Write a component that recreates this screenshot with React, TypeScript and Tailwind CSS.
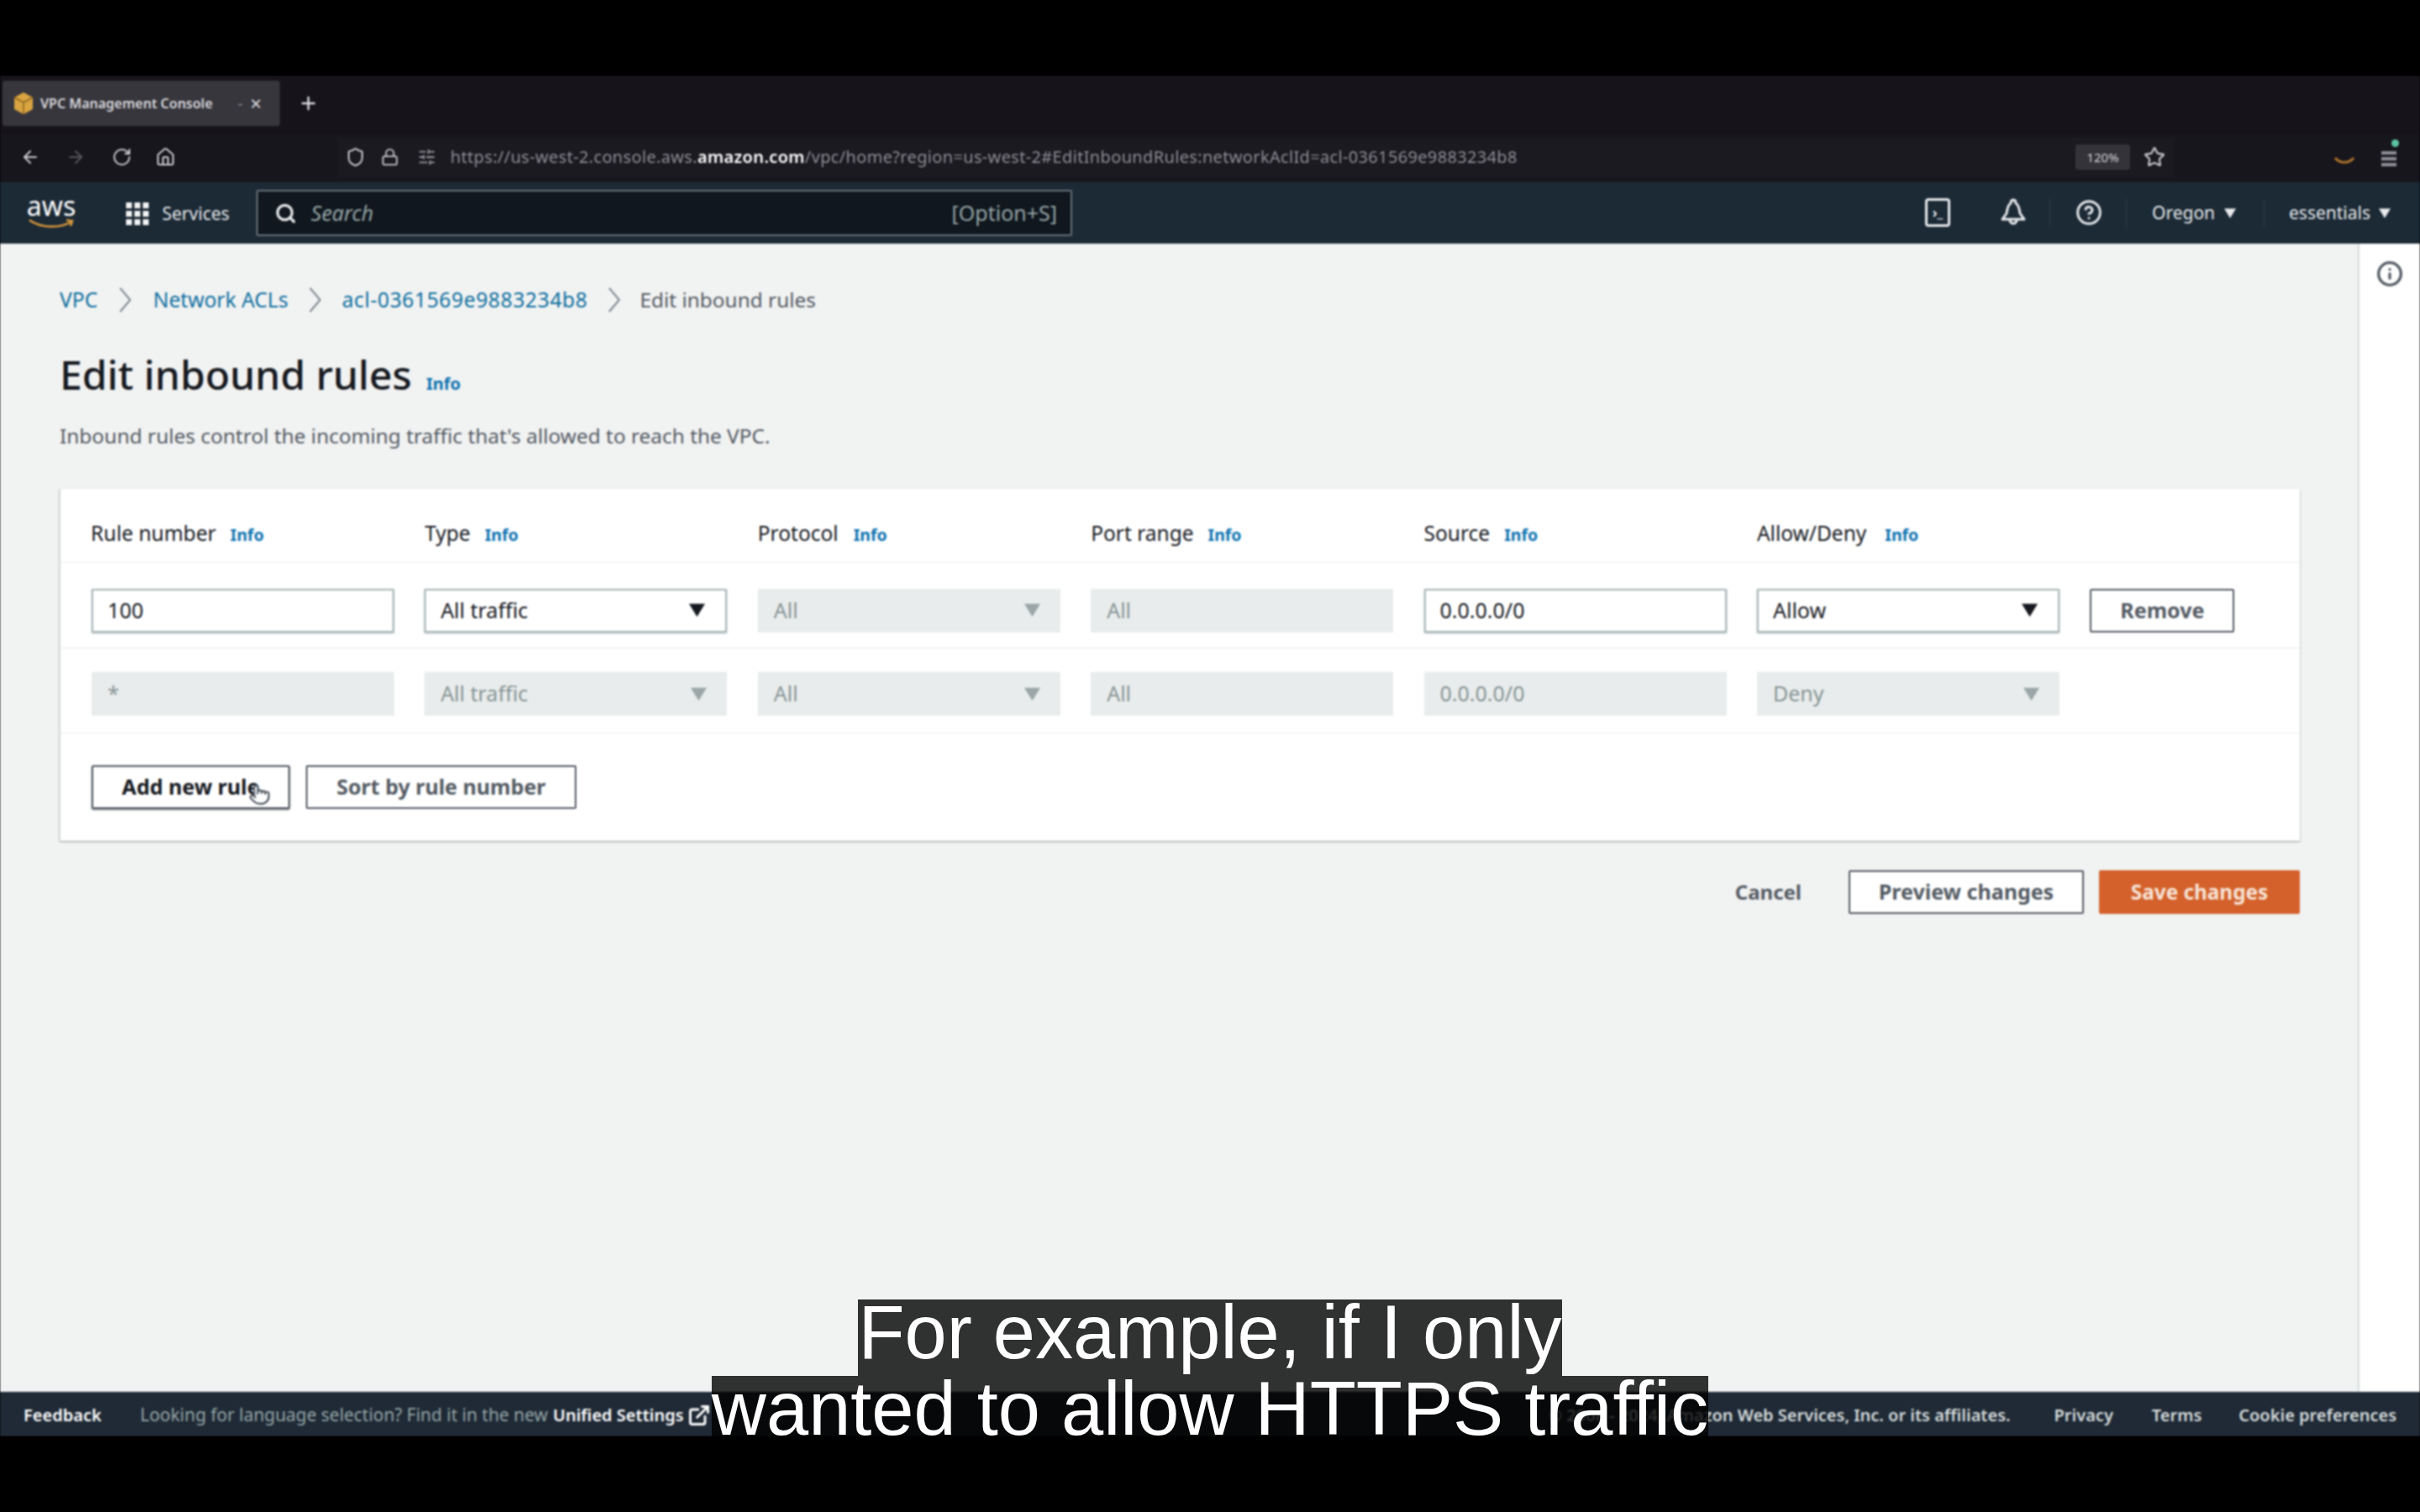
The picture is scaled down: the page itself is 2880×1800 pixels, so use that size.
import React from "react";
import { ArrowLeft, ArrowRight, RotateCw, Home, Shield, Lock, Star, Plus, Search, CircleHelp, Info, ExternalLink, SlidersHorizontal, Pointer } from "lucide-react";

const Caret = ({ c = "#16191f", s = "w-[17px] h-[14px]" }: { c?: string; s?: string }) => (
  <svg viewBox="0 0 17 14" className={s}><polygon points="0,0 17,0 8.5,14" fill={c} /></svg>
);

const Crumb = ({ cls = "mx-[26px]" }: { cls?: string }) => (
  <svg viewBox="0 0 14 30" className={`${cls} w-[14px] h-[30px]`}><polyline points="1,1 13,15 1,29" fill="none" stroke="#7d868e" strokeWidth="2" /></svg>
);

const InfoLink = ({ cls = "text-[19.5px]" }: { cls?: string }) => <span className={`${cls} font-bold text-[#0f73b0]`}>Info</span>;

function Field({ text, disabled, select }: { text: string; disabled?: boolean; select?: boolean }) {
  return (
    <div className={`h-[52px] flex items-center justify-between pr-[24px] text-[25px] ${disabled ? "pl-[19px] bg-[#e9ecec] text-[#879596]" : "pl-[17px] bg-white text-[#16191f] border-2 border-[#aab7b8] shadow-[0_1px_2px_#aab7b8]"}`}>
      <span>{text}</span>
      {select && <Caret c={disabled ? "#9aa6a7" : "#16191f"} s="w-[19px] h-[17px]" />}
    </div>
  );
}

const Header = ({ label, cls = "gap-[17px]" }: { label: string; cls?: string }) => (
  <div className={`flex items-baseline ${cls} text-[24.5px] text-[#16191f] whitespace-nowrap`}>
    <span>{label}</span>
    <InfoLink />
  </div>
);

const Button = ({ children, cls = "" }: { children: React.ReactNode; cls?: string }) => (
  <div className={`h-[52px] flex items-center justify-center border-2 border-[#545b64] bg-white text-[25px] font-bold text-[#545b64] rounded-[2px] ${cls}`}>{children}</div>
);

const rowGrid = "grid grid-cols-[repeat(6,360px)_172px] gap-x-[36.4px] pl-[37px] items-center border-b border-[#eaeded]";

export default function App() {
  return (
    <div className="w-[2880px] h-[1800px] bg-black pt-[90px] font-['Noto_Sans',sans-serif] overflow-hidden">
      <div className="relative h-[1620px] overflow-hidden flex flex-col">
        <div className="relative blur-[1px] h-full flex flex-col">
          {/* Tab strip */}
          <div className="h-[70px] bg-[#16141a] flex items-start pt-[6px] pl-[3px] text-[#d9d9de]">
            <div className="w-[330px] h-[54px] bg-[#37363c] rounded-[3px] flex items-center pl-[13px]">
              <svg viewBox="0 0 24 28" className="w-[24px] h-[28px]"><path d="M12 1 23 7v14l-11 6L1 21V7z" fill="#d9a441" /><path d="M1 7l11 6 11-6M12 13v14" stroke="#8a6420" strokeWidth="1.5" fill="none" /></svg>
              <span className="ml-[8px] text-[16px] font-semibold whitespace-nowrap">VPC Management Console</span>
              <span className="ml-[30px] text-[18px] text-[#8b8b92]">-</span>
              <span className="ml-[8px] text-[18px]">✕</span>
            </div>
            <Plus className="ml-[22px] mt-[15px] w-[24px] h-[24px]" strokeWidth={2.5} />
          </div>

          {/* Browser navigation row */}
          <div className="h-[57px] pb-[3px] bg-[#17161c] flex items-center text-[#c9c9cf] relative">
            <div className="w-[402px] shrink-0 flex items-center pl-[24px]">
              <ArrowLeft className="w-[24px] h-[24px]" />
              <ArrowRight className="ml-[30px] w-[24px] h-[24px] text-[#55555c]" />
              <RotateCw className="ml-[31px] w-[24px] h-[24px]" />
              <Home className="ml-[28px] w-[24px] h-[24px]" />
            </div>
            <div className="w-[2185px] shrink-0 h-[47px] bg-[#1b1a20] flex items-center pl-[9px] whitespace-nowrap">
              <Shield className="shrink-0 w-[24px] h-[26px]" />
              <Lock className="shrink-0 ml-[18px] w-[22px] h-[26px]" />
              <SlidersHorizontal className="shrink-0 ml-[22px] w-[22px] h-[22px] text-[#9a9aa2]" />
              <span className="ml-[17px] text-[20px] text-[#8e8e96] tracking-[0.34px]">https://us-west-2.console.aws.<span className="text-white font-semibold">amazon.com</span>/vpc/home?region=us-west-2#EditInboundRules:networkAclId=acl-0361569e9883234b8</span>
              <div className="ml-auto mr-[10px] flex items-center">
                <span className="w-[65px] h-[30px] bg-[#34333a] rounded-[3px] flex items-center justify-center text-[15px] text-[#d6d6da]">120%</span>
                <Star className="ml-[16px] w-[26px] h-[26px]" />
              </div>
            </div>
            <svg viewBox="0 0 24 10" className="absolute left-[2778px] top-[26px] w-[24px] h-[10px]"><path d="M1 2c6 7 16 7 22 0" stroke="#a9702a" strokeWidth="3" fill="none" /></svg>
            <div className="absolute left-[2834px] top-[14px] w-[18px] h-[24px] flex flex-col justify-end gap-[3px]">
              <span className="h-[4px] bg-[#8e8e96]" /><span className="h-[4px] bg-[#8e8e96]" /><span className="h-[4px] bg-[#8e8e96]" />
            </div>
            <span className="absolute left-[2846px] top-[6px] w-[9px] h-[9px] rounded-full bg-[#5ec5a4]" />
          </div>

          {/* AWS console bar */}
          <div className="h-[73px] bg-[#1c2a36] flex items-center text-[#e8eaec] relative">
            <div className="w-[305px] shrink-0 flex items-center">
              <div className="ml-[32px] w-[58px] h-[50px] flex flex-col items-center">
                <span className="text-[32px] leading-[32px] text-white">aws</span>
                <svg viewBox="0 0 56 12" className="w-[56px] h-[12px] -mt-[1px]"><path d="M2 2c14 10 36 10 50 2M46 2l7 1-2 6" stroke="#d99a3c" strokeWidth="2.5" fill="none" /></svg>
              </div>
              <svg viewBox="0 0 30 30" className="ml-[58px] w-[30px] h-[30px]" fill="#f2f3f3">
                {[2, 12, 22].map((y) => [2, 12, 22].map((x) => <rect key={`${x}-${y}`} x={x} y={y} width="7" height="7" />))}
              </svg>
              <span className="ml-[15px] mt-[2px] text-[21px] whitespace-nowrap">Services</span>
            </div>
            <div className="w-[971px] h-[55px] bg-[#10171e] border-2 border-[#687078] rounded-[2px] flex items-center pl-[20px] pr-[16px]">
              <Search className="w-[26px] h-[26px]" strokeWidth={3} />
              <span className="ml-[17px] text-[25px] italic text-[#95a5a6]">Search</span>
              <span className="ml-auto text-[25px] text-[#95a5a6]">[Option+S]</span>
            </div>
            <div className="absolute left-[2291px] top-[19px] w-[30px] h-[34px] border-[3px] border-[#e8eaec] rounded-[4px] flex items-center justify-center text-[16px] font-bold leading-none">›_</div>
            <svg viewBox="0 0 30 34" className="absolute left-[2381px] top-[19px] w-[30px] h-[34px]" fill="none" stroke="#e8eaec" strokeWidth="3" strokeLinejoin="round">
              <path d="M15 2c-2 0-3 2-3 4C8 8 8 13 7 18l-5 7h26l-5-7c-1-5-1-10-5-12 0-2-1-4-3-4z" />
              <path d="M11 26a4 4 0 0 0 8 0" />
            </svg>
            <span className="absolute left-[2439px] top-[20px] w-px h-[34px] bg-[#2f3d4a]" />
            <CircleHelp className="absolute left-[2470px] top-[20px] w-[32px] h-[32px]" strokeWidth={2.2} />
            <span className="absolute left-[2530px] top-[20px] w-px h-[34px] bg-[#2f3d4a]" />
            <span className="absolute left-[2561px] top-[21px] text-[21px]">Oregon</span>
            <Caret c="#e8eaec" s="absolute left-[2647px] top-[31px] w-[14px] h-[12px]" />
            <span className="absolute left-[2694px] top-[20px] w-px h-[34px] bg-[#2f3d4a]" />
            <span className="absolute left-[2724px] top-[21px] text-[21px]">essentials</span>
            <Caret c="#e8eaec" s="absolute left-[2831px] top-[31px] w-[14px] h-[12px]" />
          </div>

          {/* Main */}
          <div className="flex-1 flex min-h-0">
            <div className="flex-1 bg-[#f1f2f2] pl-[71px] pr-[69px] pt-[48px]">
              <nav className="flex items-center h-[38px] text-[24.6px] whitespace-nowrap">
                <span className="text-[#0f6f9f]">VPC</span>
                <Crumb />
                <span className="text-[#0f6f9f]">Network ACLs</span>
                <Crumb cls="mx-[25px]" />
                <span className="text-[#0f6f9f] tracking-[0.6px]">acl-0361569e9883234b8</span>
                <Crumb cls="ml-[25px] mr-[23px]" />
                <span className="text-[#545b64] text-[24.4px]">Edit inbound rules</span>
              </nav>
              <div className="mt-[38px] flex items-baseline h-[64px]">
                <h1 className="text-[48px] font-medium leading-[64px] text-[#16191f] whitespace-nowrap">Edit inbound rules</h1>
                <span className="ml-[17px]"><InfoLink cls="text-[20px]" /></span>
              </div>
              <p className="mt-[23px] text-[24.4px] leading-[36px] text-[#545b64] whitespace-nowrap">Inbound rules control the incoming traffic that's allowed to reach the VPC.</p>

              <section className="mt-[45px] h-[419px] bg-white border-l border-[#d5dbdb] shadow-[0_1px_2px_#8d9696] relative">
                <div className={`${rowGrid} h-[88px] pt-[20px]`}>
                  <Header label="Rule number" cls="gap-[17px] -ml-[1px]" />
                  <Header label="Type" />
                  <Header label="Protocol" cls="gap-[18px]" />
                  <Header label="Port range" />
                  <Header label="Source" />
                  <Header label="Allow/Deny" cls="gap-[22px]" />
                </div>
                <div className={`${rowGrid} h-[102px] pt-[12px]`}>
                  <Field text="100" />
                  <Field text="All traffic" select />
                  <Field text="All" disabled select />
                  <Field text="All" disabled />
                  <Field text="0.0.0.0/0" />
                  <Field text="Allow" select />
                  <Button>Remove</Button>
                </div>
                <div className={`${rowGrid} h-[101px] pt-[8px]`}>
                  <Field text="*" disabled />
                  <Field text="All traffic" disabled select />
                  <Field text="All" disabled select />
                  <Field text="All" disabled />
                  <Field text="0.0.0.0/0" disabled />
                  <Field text="Deny" disabled select />
                </div>
                <div className="flex pl-[37px] pt-[38px] gap-[19px]">
                  <Button cls="w-[236px] !text-[#16191f] shadow-[0_1px_2px_#545b64]">Add new rule</Button>
                  <Button cls="w-[322px]">Sort by rule number</Button>
                </div>
                <Pointer className="absolute left-[224px] top-[349px] w-[26px] h-[30px] text-[#545b64] fill-white" strokeWidth={2} />
              </section>

              <div className="mt-[35px] flex items-center justify-end">
                <span className="text-[24px] font-bold text-[#545b64] mr-[56px]">Cancel</span>
                <Button cls="w-[280px] mr-[18px]">Preview changes</Button>
                <div className="w-[239px] h-[52px] bg-[#d4612b] rounded-[2px] flex items-center justify-center text-[24.3px] font-bold text-[#f6e3d6]">Save changes</div>
              </div>
            </div>
            <aside className="w-[74px] bg-white border-l-2 border-[#d5dbdb] flex justify-center pt-[20px]">
              <Info className="w-[32px] h-[32px] text-[#545b64]" strokeWidth={2.5} />
            </aside>
          </div>

          {/* Footer */}
          <footer className="h-[53px] pt-[2px] bg-[#1f2a36] flex items-center pl-[28px] pr-[28px] text-[20px] text-[#d5dbdb] whitespace-nowrap">
            <span className="font-semibold text-white">Feedback</span>
            <span className="ml-[46px] text-[20.9px] text-[#95a5a6]">Looking for language selection? Find it in the new</span>
            <span className="ml-[6px] font-semibold text-white">Unified Settings</span>
            <ExternalLink className="ml-[4px] w-[28px] h-[28px] text-white" strokeWidth={2.5} />
            <span className="ml-auto font-semibold">© 2008 - 2024, Amazon Web Services, Inc. or its affiliates.</span>
            <span className="ml-[52px] font-semibold">Privacy</span>
            <span className="ml-[46px] font-semibold">Terms</span>
            <span className="ml-[44px] font-semibold">Cookie preferences</span>
          </footer>
        </div>

        {/* Caption */}
        <div className="absolute left-0 right-0 top-[1457px] flex flex-col items-center font-['Liberation_Sans',sans-serif] text-[90.2px] text-white whitespace-nowrap">
          <span className="bg-black/80 h-[91px] leading-[77px]">For example, if I only</span>
          <span className="bg-black/80 h-[91px] leading-[77px]">wanted to allow HTTPS traffic</span>
        </div>
      </div>
    </div>
  );
}
